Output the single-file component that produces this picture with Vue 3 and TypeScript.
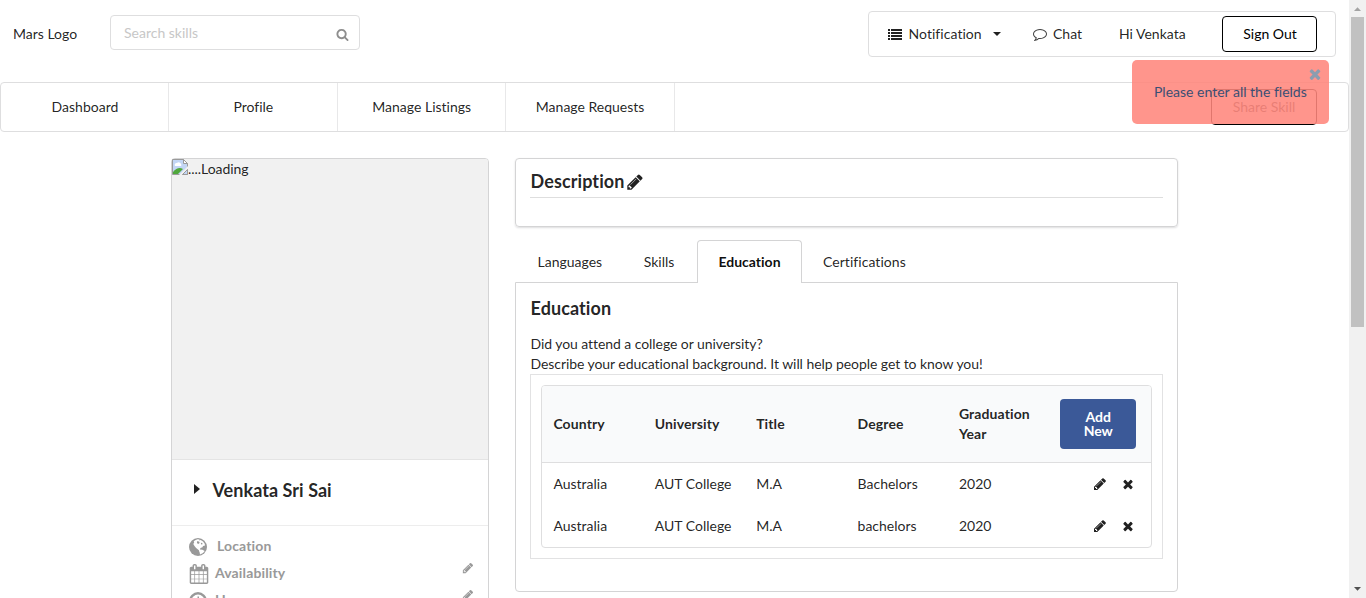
<script setup lang="ts">
interface EducationRow {
  country: string
  university: string
  title: string
  degree: string
  year: string
}

const links: string[] = ['Dashboard', 'Profile', 'Manage Listings', 'Manage Requests']
const tabs: string[] = ['Languages', 'Skills', 'Education', 'Certifications']
const activeTab = 'Education'
const columns: string[] = ['Country', 'University', 'Title', 'Degree', 'Graduation Year']
const rows: EducationRow[] = [
  { country: 'Australia', university: 'AUT College', title: 'M.A', degree: 'Bachelors', year: '2020' },
  { country: 'Australia', university: 'AUT College', title: 'M.A', degree: 'bachelors', year: '2020' },
]

const pencil =
  'M491 1536l91-91-235-235-91 91v107h128v128h107zm523-928q0-22-22-22-10 0-17 7l-542 542q-7 7-7 17 0 22 22 22 10 0 17-7l542-542q7-7 7-17zm-54-192l416 416-832 832h-416v-416zm683 96q0 53-37 90l-166 166-416-416 166-165q36-38 90-38 53 0 91 38l235 234q37 39 37 91z'
const cross =
  'M1490 1322q0 40-28 68l-136 136q-28 28-68 28t-68-28l-294-294-294 294q-28 28-68 28t-68-28l-136-136q-28-28-28-68t28-68l294-294-294-294q-28-28-28-68t28-68l136-136q28-28 68-28t68 28l294 294 294-294q28-28 68-28t68 28l136 136q28 28 28 68t-28 68l-294 294 294 294q28 28 28 68z'
const magnifier =
  'M1216 832q0-185-131.5-316.5t-316.5-131.5-316.5 131.5-131.5 316.5 131.5 316.5 316.5 131.5 316.5-131.5 131.5-316.5zm512 832q0 52-38 90t-90 38q-54 0-90-38l-343-342q-179 124-399 124-143 0-273.5-55.5t-225-150-150-225-55.5-273.5 55.5-273.5 150-225 225-150 273.5-55.5 273.5 55.5 225 150 150 225 55.5 273.5q0 220-124 399l343 343q37 37 37 90z'
const comment =
  'M896 384q-204 0-381.5 69.5t-282 187.5-104.5 255q0 112 71.5 213.5t201.5 175.5l87 50-27 96q-24 91-70 172 152-63 275-171l43-38 57 6q69 8 130 8 204 0 381.5-69.5t282-187.5 104.5-255-104.5-255-282-187.5-381.5-69.5zm896 512q0 174-120 321.5t-326 233-450 85.5q-70 0-145-8-198 175-460 242-49 14-114 22h-5q-15 0-27-10.5t-16-27.5v-1q-3-4-.5-12t2-10 4.5-9.5l6-9 7-8.5 8-9q7-8 31-34.5t34.5-38 31-39.5 32.5-51 27-59 26-76q-157-89-247.5-220t-90.5-281q0-174 120-321.5t326-233 450-85.5 450 85.5 326 233 120 321.5z'
const calendar =
  'M192 1664h288v-288h-288v288zm352 0h320v-288h-320v288zm-352-352h288v-320h-288v320zm352 0h320v-320h-320v320zm-352-384h288v-288h-288v288zm736 736h320v-288h-320v288zm-384-736h320v-288h-320v288zm768 736h288v-288h-288v288zm-384-352h320v-320h-320v320zm-352-864v-288q0-13-9.5-22.5t-22.5-9.5h-64q-13 0-22.5 9.5t-9.5 22.5v288q0 13 9.5 22.5t22.5 9.5h64q13 0 22.5-9.5t9.5-22.5zm736 864h288v-320h-288v320zm-384-384h320v-288h-320v288zm384 0h288v-288h-288v288zm32-480v-288q0-13-9.5-22.5t-22.5-9.5h-64q-13 0-22.5 9.5t-9.5 22.5v288q0 13 9.5 22.5t22.5 9.5h64q13 0 22.5-9.5t9.5-22.5zm384-64v1280q0 52-38 90t-90 38h-1408q-52 0-90-38t-38-90v-1280q0-52 38-90t90-38h128v-96q0-66 47-113t113-47h64q66 0 113 47t47 113v96h384v-96q0-66 47-113t113-47h64q66 0 113 47t47 113v96h128q52 0 90 38t38 90z'
</script>

<template>
  <div class="screen">
    <div class="page">
      <header class="top">
        <span class="logo">Mars Logo</span>
        <div class="search">
          <span>Search skills</span>
          <svg class="i-search" viewBox="0 0 1792 1792"><path :d="magnifier" /></svg>
        </div>
        <div class="account">
          <svg class="i-list" viewBox="0 0 14 11" shape-rendering="crispEdges">
            <path d="M0 0h2v2H0zM3 0h11v2H3zM0 3h2v2H0zM3 3h11v2H3zM0 6h2v2H0zM3 6h11v2H3zM0 9h2v2H0zM3 9h11v2H3z" />
          </svg>
          <span class="notif">Notification</span>
          <svg class="i-caret" viewBox="0 0 8 4"><path d="M0 0h8L4 4z" /></svg>
          <svg class="i-chat" viewBox="0 0 1792 1792"><path :d="comment" /></svg>
          <span class="chat">Chat</span>
          <span class="hi">Hi Venkata</span>
          <button class="outline sign">Sign Out</button>
        </div>
      </header>

      <nav class="nav">
        <a v-for="l in links" :key="l" class="link">{{ l }}</a>
        <button class="outline share">Share Skill</button>
      </nav>

      <main class="main">
        <aside class="card">
          <div class="photo">
            <svg class="broken" viewBox="0 0 16 16">
              <path d="M.5.5h11l4 4v11H.5z" fill="#c3d6f5" stroke="#9a9a9a" />
              <path d="M11.5.5v4h4z" fill="#fff" stroke="#9a9a9a" />
              <path d="M3 7a2 2 0 0 1 2-3 2.5 2.5 0 0 1 4 1 1.5 1.5 0 0 1 0 2z" fill="#fff" />
              <path d="M1 15v-2q5-6 10-3l-5 5z" fill="#50a83c" />
              <path d="M16 7L7 16h3l6-6z" fill="#f1f1f1" />
              <path d="M15.500 10.500v5h-5z" fill="#c3d6f5" stroke="#9a9a9a" />
            </svg><span>....Loading</span>
          </div>
          <div class="name">
            <svg class="i-right" viewBox="0 0 6 10"><path d="M0 0l6 5-6 5z" /></svg>
            <span>Venkata Sri Sai</span>
          </div>
          <ul class="facts">
            <li>
              <svg class="i-globe" viewBox="0 0 18 18">
                <circle cx="9" cy="9" r="9" />
                <path
                  d="M6.200 2.200L8.500 1.300l2 .3-.4 1 1.600-.5 2.300 1.500 1.700 2.200.3 1.800-2 .3-.5 1.400-2 .8-.6 1.500.8.9-1.200.2-1.800-1.400-1.600-1.200L5.500 8 4.300 6l.9-1.500L4.700 3.300zM11.200 11.400l2.200.3 2.300 1.300-1.700 2-3 1.500-.4-2.300-.7-1.500z"
                  fill="#fff"
                />
                <path d="M8.300 3l2 .8.300 1.300-1.400.8-1.300-1zM11.800 4.800l1.500.3.2 1.200-1.300.2z" />
              </svg>
              <span class="loc">Location</span>
            </li>
            <li>
              <svg class="i-cal" viewBox="64 0 1664 1792"><path :d="calendar" /></svg>
              <span>Availability</span>
              <svg class="edit" viewBox="0 0 1792 1792"><path :d="pencil" /></svg>
            </li>
            <li>
              <svg class="i-clock" viewBox="0 0 18 18">
                <circle cx="9" cy="9" r="7.700" fill="none" stroke="currentColor" stroke-width="2.400" />
                <path d="M8.500 4.500h1.500v6H6V9h2.500z" />
              </svg>
              <span>Hours</span>
              <svg class="edit" viewBox="0 0 1792 1792"><path :d="pencil" /></svg>
            </li>
          </ul>
        </aside>

        <section class="content">
          <div class="desc">
            <h3>
              Description<svg class="i-desc" viewBox="0 0 1792 1792"><path :d="pencil" /></svg>
            </h3>
          </div>
          <div class="tabs">
            <a v-for="t in tabs" :key="t" :class="['tab', { active: t === activeTab }]">{{ t }}</a>
          </div>
          <div class="panel">
            <h3>Education</h3>
            <p>Did you attend a college or university?<br />Describe your educational background. It will help people get to know you!</p>
            <div class="frame">
              <div class="table">
                <div class="tr head">
                  <div v-for="c in columns" :key="c">{{ c }}</div>
                  <div><button class="add">Add New</button></div>
                </div>
                <div v-for="r in rows" :key="r.degree" class="tr">
                  <div>{{ r.country }}</div>
                  <div>{{ r.university }}</div>
                  <div>{{ r.title }}</div>
                  <div>{{ r.degree }}</div>
                  <div>{{ r.year }}</div>
                  <div class="actions">
                    <svg viewBox="0 0 1792 1792"><path :d="pencil" /></svg>
                    <svg viewBox="0 0 1792 1792"><path :d="cross" /></svg>
                  </div>
                </div>
              </div>
            </div>
          </div>
        </section>
      </main>

      <div class="toast">
        <span>Please enter all the fields</span>
        <svg viewBox="0 0 1792 1792"><path :d="cross" /></svg>
      </div>
    </div>

    <div class="scroll">
      <svg viewBox="0 0 17 17"><path d="M5 11h7L8.500 7.200z" fill="#a3a3a3" /></svg>
      <div class="thumb"></div>
      <svg class="down" viewBox="0 0 17 17"><path d="M5 6h7L8.500 9.800z" fill="#505050" /></svg>
    </div>
  </div>
</template>

<style>
body {
  background: #fff;
  overflow: hidden;
}
</style>

<style scoped>
* {
  box-sizing: border-box;
}
.screen {
  display: flex;
  width: 1366px;
  height: 598px;
  overflow: hidden;
  font: 14px/20px Lato, 'Liberation Sans', sans-serif;
  font-variant-ligatures: none;
  color: rgba(0, 0, 0, 0.87);
}
svg {
  fill: currentColor;
  flex: none;
  display: block;
}
button {
  font-family: inherit;
  font-size: 14px;
}
.page {
  position: relative;
  width: 1349px;
  height: 598px;
  overflow: hidden;
}
.top {
  display: flex;
  height: 82px;
  padding: 11px 13px 0;
}
.logo {
  width: 97px;
  padding-top: 13px;
}
.search {
  display: flex;
  justify-content: space-between;
  width: 250px;
  height: 35px;
  margin-top: 4px;
  padding: 7px 10px 0 13px;
  border: 1px solid #dededf;
  border-radius: 4px;
  color: #c7c7c7;
}
.i-search {
  width: 13px;
  height: 13px;
  margin-top: 5px;
  color: #8e8e8e;
}
.account {
  display: flex;
  align-items: center;
  width: 468px;
  height: 46px;
  margin-left: auto;
  padding-left: 19px;
  border: 1px solid #dededf;
  border-radius: 4px;
}
.i-list {
  width: 14px;
  height: 11px;
}
.notif {
  width: 84.500px;
  margin-left: 6.500px;
  letter-spacing: 0.05px;
}
.i-caret {
  width: 8px;
  height: 4px;
}
.i-chat {
  width: 14px;
  height: 14px;
  margin-left: 32px;
  color: rgba(0, 0, 0, 0.75);
}
.chat {
  width: 66px;
  margin-left: 6px;
}
.hi {
  width: 103px;
}
.outline {
  height: 36px;
  padding: 0 0 2px;
  background: #fff;
  border: 1px solid #000;
  border-radius: 4px;
  color: #000;
}
.sign {
  width: 95px;
  padding-left: 1px;
}
.nav {
  display: flex;
  height: 50px;
  border: 1px solid #dededf;
  border-radius: 4px;
}
.link {
  width: 168.400px;
  padding-left: 0.500px;
  border-right: 1px solid #e8e8e9;
  line-height: 48px;
  text-align: center;
}
.share {
  width: 106px;
  margin: 6px 31px 0 auto;
  color: #444;
}
.main {
  display: flex;
  gap: 26px;
  padding: 26px 0 0 171px;
}
.card {
  width: 318px;
  height: 600px;
  border: 1px solid #d4d4d5;
  border-radius: 4px;
}
.photo {
  display: flex;
  height: 301px;
  background: #f1f1f1;
  border-bottom: 1px solid #e4e4e4;
  border-radius: 3px 3px 0 0;
}
.photo span {
  letter-spacing: -0.05px;
}
.broken {
  width: 16px;
  height: 16px;
}
.name {
  display: flex;
  height: 66px;
  padding: 16px 0 0 22px;
  border-bottom: 1px solid #ededed;
  font-size: 18px;
  line-height: 28px;
}
.name span {
  font-weight: 700;
  letter-spacing: 0.05px;
}
.i-right {
  width: 6px;
  height: 10px;
  margin: 8px 12.500px 0 0;
}
.facts {
  margin: 0;
  padding: 7px 14px 0 17px;
  list-style: none;
  color: #999;
  font-weight: 700;
}
.facts li {
  display: flex;
  height: 27px;
  line-height: 25px;
}
.facts span {
  letter-spacing: 0.13px;
}
.loc {
  margin-left: 2px;
}
.i-globe,
.i-clock {
  width: 18px;
  height: 18px;
  margin: 5px 8px 0 0;
}
.i-cal {
  width: 20px;
  height: 20px;
  margin: 4px 6px 0 0;
}
.edit {
  width: 12px;
  height: 12px;
  margin: 2px 0 0 auto;
}
.content {
  width: 663px;
}
h3 {
  margin: 0;
  font-size: 18px;
  line-height: 23px;
  font-weight: 700;
  letter-spacing: 0.1px;
}
.desc {
  height: 69px;
  padding: 11px 14px 0;
  border: 1px solid #d4d4d5;
  border-radius: 4px;
  box-shadow: 0 1px 2px rgba(34, 36, 38, 0.15);
}
.desc h3 {
  display: flex;
  height: 28px;
  padding-left: 0.500px;
  border-bottom: 1px solid #dedede;
}
.i-desc {
  width: 18px;
  height: 18px;
  margin: 3px 0 0 1px;
}
.tabs {
  display: flex;
  height: 43px;
  margin-top: 13px;
}
.tab {
  flex: none;
  padding: 11px 0 0 20px;
  border: 1px solid transparent;
  border-bottom: 0;
}
.tab:first-child {
  width: 108px;
  padding-left: 21.500px;
}
.tab:nth-child(2) {
  width: 74px;
  padding-left: 19.700px;
}
.tab:last-child {
  letter-spacing: 0.05px;
}
.tab.active {
  width: 105px;
  padding: 11px 0 0;
  background: #fff;
  border-color: #d4d4d5;
  border-radius: 4px 4px 0 0;
  font-weight: 700;
  text-align: center;
  color: rgba(0, 0, 0, 0.95);
  position: relative;
}
.panel {
  height: 310px;
  margin-top: -1px;
  padding: 14px;
  border: 1px solid #d4d4d5;
  border-radius: 0 0 4px 4px;
}
.panel p {
  margin: 14px 0 0;
  padding-left: 0.500px;
  letter-spacing: -0.065px;
}
.panel h3 {
  padding-left: 0.500px;
}
.frame {
  height: 185px;
  padding: 10px;
  border: 1px solid #e2e2e3;
}
.table {
  height: 163px;
  border: 1px solid #dededf;
  border-radius: 4px;
  overflow: hidden;
}
.tr {
  display: grid;
  grid-template-columns: repeat(6, 101.400px);
  align-items: center;
  height: 42px;
}
.tr > div {
  padding: 0 11px 0 11.400px;
}
.tr > div:last-child {
  padding: 0 0 0 10.800px;
}
.head {
  height: 77px;
  background: #f9fafb;
  border-bottom: 1px solid #dededf;
  font-weight: 700;
  letter-spacing: 0.1px;
}
.add {
  display: block;
  width: 76px;
  height: 50px;
  padding: 0 20px 0 21px;
  background: #3b5998;
  border: 0;
  border-radius: 4px;
  color: #fff;
  font-weight: 700;
  line-height: 14px;
}
.tr > .actions:last-child {
  display: flex;
  gap: 14px;
  padding-left: 44px;
}
.actions svg {
  width: 14px;
  height: 14px;
}
.toast {
  position: absolute;
  left: 1132px;
  top: 60px;
  width: 197px;
  height: 64px;
  padding: 22px 0 0 22px;
  background: rgba(255, 134, 124, 0.88);
  border-radius: 5px;
  color: #3b4f74;
  white-space: nowrap;
}
.toast svg {
  position: absolute;
  top: 6px;
  right: 6px;
  width: 16px;
  height: 16px;
  color: #8c9db0;
}
.scroll {
  display: flex;
  flex-direction: column;
  width: 17px;
  background: #f1f1f1;
}
.scroll svg {
  width: 17px;
  height: 17px;
}
.thumb {
  width: 13px;
  height: 310px;
  margin-left: 2px;
  background: #c1c1c1;
}
.scroll .down {
  margin-top: auto;
}
</style>
